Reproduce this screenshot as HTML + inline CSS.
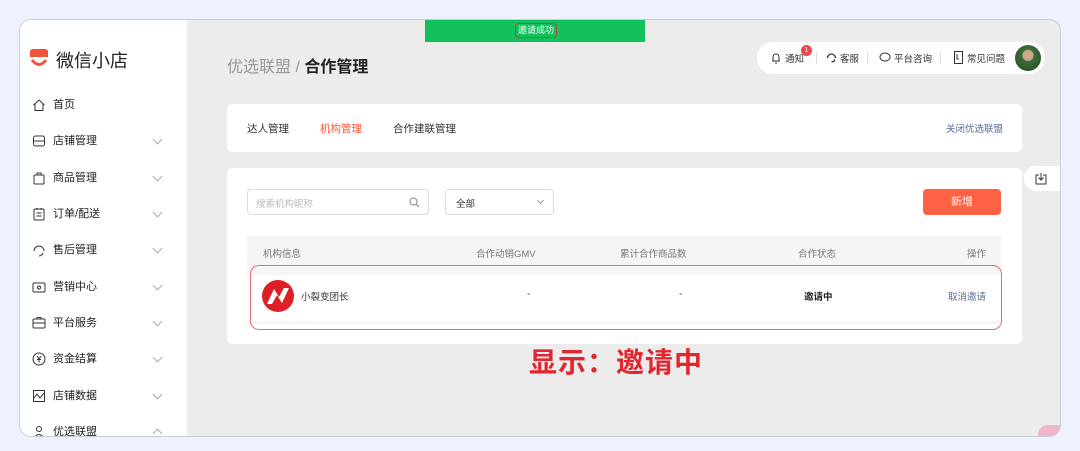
<!DOCTYPE html><html><head><meta charset="utf-8"><style>
*{margin:0;padding:0;box-sizing:border-box}
body{width:1080px;height:451px;background:#eef2fd;font-family:"Liberation Sans","Noto Sans CJK SC",sans-serif;position:relative;overflow:hidden;color:#333}
.frame{position:absolute;left:19px;top:19px;width:1042px;height:418px;border:1.5px solid #c9ccd4;border-radius:12px;overflow:hidden;background:#ececec}
.side{position:absolute;left:0;top:0;width:167px;height:100%;background:#fff}
.a{position:absolute}
.item{position:absolute;left:12px;font-size:11px;color:#222;height:16px;line-height:16px;width:135px}
.item .ic{position:absolute;left:0;top:1px;width:14px;height:14px}
.item span{position:absolute;left:21px}
.item .ch{position:absolute;left:122px;top:3px;width:7px;height:7px;border-right:1px solid #aaa;border-bottom:1px solid #aaa;transform:rotate(45deg)}
.card{position:absolute;background:#fff;border-radius:6px}
.th{font-size:9.5px;color:#777;position:absolute}
</style></head><body>
<div class="frame">
<div class="side">
 <svg class="a" style="left:8px;top:28px" width="22" height="22" viewBox="0 0 22 22"><path d="M2 4 Q2 1 5 1 H17 Q20 1 20 4 V9 H2Z" fill="#f0553a"/><path d="M4 12 Q11 21 18 12" stroke="#f0553a" stroke-width="3" fill="none"/></svg>
 <div class="a" style="left:36px;top:27px;font-size:18px;color:#222">微信小店</div>
 <div class="item" style="top:77px"><svg class="ic" viewBox="0 0 14 14" fill="none" stroke="#333"><path d="M1.5 7 L7 2 L12.5 7 M3 6 V12.5 H11 V6"/></svg><span>首页</span></div>
 <div class="item" style="top:113px"><svg class="ic" viewBox="0 0 14 14" fill="none" stroke="#333"><rect x="1.5" y="2" width="11" height="10" rx="2"/><path d="M1.5 7H12.5"/></svg><span>店铺管理</span><i class="ch"></i></div>
 <div class="item" style="top:150px"><svg class="ic" viewBox="0 0 14 14" fill="none" stroke="#333"><rect x="2" y="4" width="10" height="9" rx="1"/><path d="M5 4V2H9V4"/></svg><span>商品管理</span><i class="ch"></i></div>
 <div class="item" style="top:186px"><svg class="ic" viewBox="0 0 14 14" fill="none" stroke="#333"><rect x="2" y="2" width="10" height="11" rx="1"/><path d="M4.5 6H9.5M4.5 9H9.5M5 1V3M9 1V3"/></svg><span>订单/配送</span><i class="ch"></i></div>
 <div class="item" style="top:222px"><svg class="ic" viewBox="0 0 14 14" fill="none" stroke="#333"><path d="M2 8 A5 5 0 1 1 12 8 M7 13 A5 5 0 0 0 11 10"/></svg><span>售后管理</span><i class="ch"></i></div>
 <div class="item" style="top:259px"><svg class="ic" viewBox="0 0 14 14" fill="none" stroke="#333"><rect x="1" y="3" width="12" height="9" rx="1"/><circle cx="7" cy="7.5" r="1.5"/></svg><span>营销中心</span><i class="ch"></i></div>
 <div class="item" style="top:295px"><svg class="ic" viewBox="0 0 14 14" fill="none" stroke="#333"><rect x="1" y="3" width="12" height="9" rx="1"/><path d="M1 7H13M5 3V1.5H9V3"/></svg><span>平台服务</span><i class="ch"></i></div>
 <div class="item" style="top:331px"><svg class="ic" viewBox="0 0 14 14" fill="none" stroke="#333"><circle cx="7" cy="7" r="6"/><path d="M5 4L7 7L9 4M7 7V10.5M5 7.5H9"/></svg><span>资金结算</span><i class="ch"></i></div>
 <div class="item" style="top:368px"><svg class="ic" viewBox="0 0 14 14" fill="none" stroke="#333"><rect x="1.5" y="1.5" width="11" height="11"/><path d="M2 9L5 5L8 9L12 4"/></svg><span>店铺数据</span><i class="ch"></i></div>
 <div class="item" style="top:404px"><svg class="ic" viewBox="0 0 14 14" fill="none" stroke="#333"><circle cx="7" cy="4" r="2.5"/><path d="M2 13 Q7 6 12 13"/></svg><span>优选联盟</span><i class="ch" style="transform:rotate(225deg);top:6px"></i></div>
</div>
<div class="a" style="left:405px;top:0;width:220px;height:22px;background:#12c15c"><div class="a" style="left:90px;top:3px;font-size:9px;color:#fff;border:1px solid #b04a3a;border-radius:4px;padding:0 2px;line-height:13px">邀请成功</div></div>
<div class="a" style="left:207px;top:33px;font-size:16px;color:#999">优选联盟 / <b style="color:#222">合作管理</b></div>
<div class="a" style="left:737px;top:22px;width:288px;height:32px;background:#fff;border-radius:16px;font-size:9.5px;color:#333">
 <svg class="a" style="left:14px;top:10px" width="10" height="12" viewBox="0 0 10 12" fill="none" stroke="#333"><path d="M2 9V5A3 3 0 0 1 8 5V9H1H9M4 11H6"/></svg>
 <div class="a" style="left:28px;top:9px">通知</div>
 <div class="a" style="left:44px;top:3px;width:11px;height:11px;border-radius:50%;background:#f2424a;color:#fff;font-size:7px;text-align:center;line-height:11px">1</div>
 <div class="a" style="left:59px;top:10px;width:1px;height:12px;background:#ddd"></div>
 <svg class="a" style="left:69px;top:10px" width="11" height="11" viewBox="0 0 11 11" fill="none" stroke="#333" stroke-width="1.3"><path d="M1.5 6A4 4 0 1 1 9.5 6M5.5 10A4 4 0 0 0 9 7.5"/></svg>
 <div class="a" style="left:83px;top:9px">客服</div>
 <div class="a" style="left:110px;top:10px;width:1px;height:12px;background:#ddd"></div>
 <svg class="a" style="left:122px;top:10px" width="12" height="11" viewBox="0 0 12 11" fill="none" stroke="#333"><ellipse cx="6" cy="5" rx="5" ry="4"/></svg>
 <div class="a" style="left:137px;top:9px">平台咨询</div>
 <div class="a" style="left:183px;top:10px;width:1px;height:12px;background:#ddd"></div>
 <svg class="a" style="left:197px;top:9px" width="9" height="13" viewBox="0 0 9 13" fill="none" stroke="#333"><rect x="0.5" y="0.5" width="8" height="12"/><path d="M3 3V8H5"/></svg>
 <div class="a" style="left:210px;top:9px">常见问题</div>
 <div class="a" style="left:258px;top:3px;width:26px;height:26px;border-radius:50%;background:radial-gradient(circle at 50% 40%,#c9a98a 0 25%,#3d6b3a 30%,#234a22)"></div>
</div>
<div class="card" style="left:207px;top:84px;width:795px;height:48px">
 <div class="a" style="left:20px;top:17px;font-size:10.5px;color:#333">达人管理</div>
 <div class="a" style="left:93px;top:17px;font-size:10.5px;color:#fa5a3c">机构管理</div>
 <div class="a" style="left:166px;top:17px;font-size:10.5px;color:#333">合作建联管理</div>
 <div class="a" style="left:719px;top:17px;font-size:9.5px;color:#5a6b9a">关闭优选联盟</div>
</div>
<div class="a" style="left:1004px;top:146px;width:40px;height:25px;background:#fff;border-radius:12px 0 0 12px"><svg class="a" style="left:11px;top:6px" width="12" height="13" viewBox="0 0 12 13" fill="none" stroke="#333"><path d="M4 3H1V12H11V3H8M6 1V8M3.5 5.5L6 8L8.5 5.5"/></svg></div>
<div class="card" style="left:207px;top:148px;width:795px;height:176px"></div>
<div class="a" style="left:227px;top:169px;width:182px;height:26px;border:1px solid #ddd;border-radius:4px;background:#fff;font-size:9.5px;color:#bbb;padding:6px 8px">搜索机构昵称<svg class="a" style="right:8px;top:7px" width="11" height="11" viewBox="0 0 11 11" fill="none" stroke="#888"><circle cx="4.5" cy="4.5" r="3.5"/><path d="M7 7L10 10"/></svg></div>
<div class="a" style="left:425px;top:169px;width:109px;height:26px;border:1px solid #ddd;border-radius:4px;background:#fff;font-size:9.5px;color:#333;padding:6px 10px">全部<i class="a" style="right:10px;top:8px;width:5px;height:5px;border-right:1px solid #999;border-bottom:1px solid #999;transform:rotate(45deg)"></i></div>
<div class="a" style="left:903px;top:169px;width:78px;height:26px;background:#ff6144;border-radius:4px;color:#fff;font-size:11px;text-align:center;line-height:26px">新增</div>
<div class="a" style="left:227px;top:216px;width:754px;height:36px;background:#f5f5f5"></div>
<div class="a" style="left:227px;top:252px;width:754px;height:52px;background:#fff;border-top:3px solid #f5f5f5;border-bottom:3px solid #f5f5f5"></div>
<div class="a" style="left:230px;top:245px;width:752px;height:65px;border:1.5px solid #ea6a72;border-radius:9px"></div>
<div class="th" style="left:243px;top:226px">机构信息</div>
<div class="th" style="left:456px;top:226px">合作动销GMV</div>
<div class="th" style="left:600px;top:226px">累计合作商品数</div>
<div class="th" style="left:778px;top:226px">合作状态</div>
<div class="th" style="left:947px;top:226px">操作</div>
<svg class="a" style="left:242px;top:260px" width="32" height="32" viewBox="0 0 32 32"><circle cx="16" cy="16" r="16" fill="#dd1f26"/><path d="M5 24 L12 9 L17 17 L22 8 L27 8 L20 23 L15 15 L10 24Z" fill="#fff"/></svg>
<div class="a" style="left:281px;top:269px;font-size:9.5px;color:#333">小裂变团长</div>
<div class="a" style="left:507px;top:269px;font-size:10px">-</div>
<div class="a" style="left:659px;top:269px;font-size:10px">-</div>
<div class="a" style="left:784px;top:269px;font-size:9.5px;color:#222;font-weight:bold">邀请中</div>
<div class="a" style="left:928px;top:269px;font-size:9.5px;color:#5a6b9a">取消邀请</div>
<div class="a" style="left:509px;top:321px;font-size:28px;font-weight:bold;color:#e0262f;letter-spacing:1px">显示：邀请中</div>
<div class="a" style="left:1018px;top:405px;width:30px;height:20px;border-radius:10px;background:#f3b3cb"></div>
</div>
</body></html>
